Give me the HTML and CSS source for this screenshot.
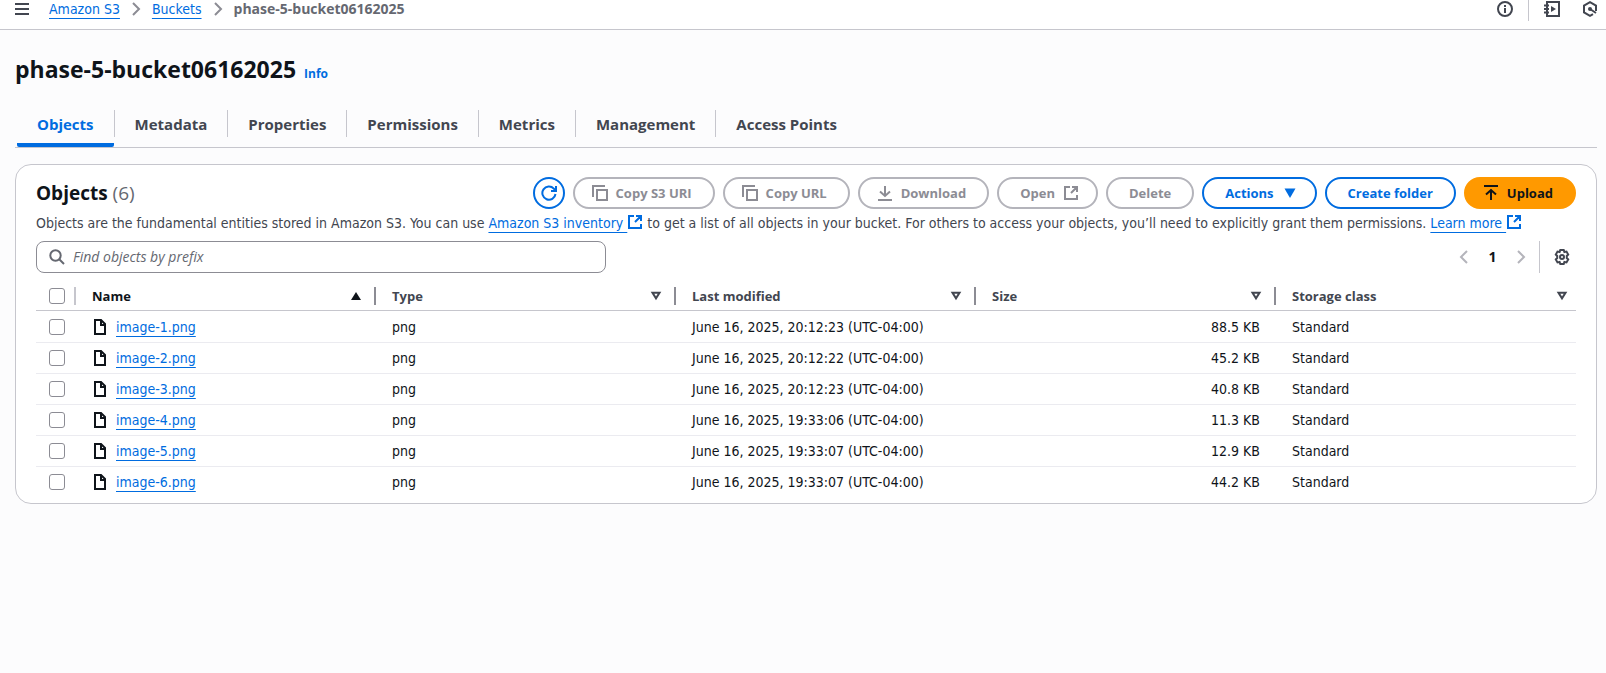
FILE: index.html
```html
<!DOCTYPE html>
<html lang="en">
<head>
<meta charset="utf-8">
<title>phase-5-bucket06162025 - S3 bucket</title>
<link rel="stylesheet" href="styles.css">
</head>
<body>
<svg class="sprite" aria-hidden="true">
  <symbol id="i-external" viewBox="0 0 16 16"><path d="M7 2H2v12h12V10M9 2h5v5M14 2L8 8" /></symbol>
  <symbol id="i-copy" viewBox="0 0 16 16"><path d="M1 12V1h12M5 5h10v10H5z" /></symbol>
  <symbol id="i-file" viewBox="0 0 16 16"><path d="M3 1h6l4 4v10H3zM9 1v5h4" /></symbol>
  <symbol id="i-sort" viewBox="0 0 16 16"><path d="M4.500 4.800h7L8 10.300z" /></symbol>
</svg>

<header class="topbar">
  <button class="icon-btn" type="button" aria-label="Open navigation"><svg class="icon" viewBox="0 0 16 16"><path d="M1 3h14M1 8h14M1 13h14"/></svg></button>
  <nav class="crumbs" aria-label="Breadcrumbs">
    <a href="#">Amazon S3</a>
    <svg class="icon chevron" viewBox="0 0 16 16"><path d="M5 2l6 6-6 6"/></svg>
    <a href="#">Buckets</a>
    <svg class="icon chevron" viewBox="0 0 16 16"><path d="M5 2l6 6-6 6"/></svg>
    <span class="current">phase-5-bucket06162025</span>
  </nav>
  <div class="tools">
    <button class="icon-btn" type="button" aria-label="Info"><svg class="icon" viewBox="0 0 16 16"><circle cx="8" cy="8" r="7"/><path d="M8 7v5M8 4v2"/></svg></button>
    <span class="tool-rule"></span>
    <button class="icon-btn" type="button" aria-label="Tutorials"><svg class="icon" viewBox="0 0 16 16"><path d="M3 1h12v14H3zM0 4.500h5M0 8h5M0 11.500h5"/><path class="solid" d="M7 5l5 3-5 3z"/></svg></button>
    <button class="icon-btn" type="button" aria-label="Assistant"><svg class="icon" viewBox="0 0 16 16"><path d="M14 10V4.600L8 1.200 2 4.600v6.800l6 3.400 3-1.700M8 8l6 4"/><circle class="solid" cx="8" cy="8" r="2"/></svg></button>
  </div>
</header>

<main class="page">
  <div class="title">
    <h1>phase-5-bucket06162025</h1>
    <a class="info" href="#">Info</a>
  </div>

  <nav class="tabs" aria-label="Bucket sections">
    <a class="tab active" href="#">Objects</a><a class="tab" href="#">Metadata</a><a class="tab" href="#">Properties</a><a class="tab" href="#">Permissions</a><a class="tab" href="#">Metrics</a><a class="tab" href="#">Management</a><a class="tab" href="#">Access Points</a>
  </nav>

  <section class="panel">
    <div class="panel-head">
      <h2>Objects <span class="count">(6)</span></h2>
      <div class="actions">
        <button class="btn round" type="button" aria-label="Refresh"><svg class="icon" viewBox="0 0 16 16"><path d="M14.500 9A6.600 6.600 0 1 1 12.800 3.600L14.500 5.500M15 1v5h-5"/></svg></button>
        <button class="btn lead" type="button" disabled><svg class="icon"><use href="#i-copy"/></svg>Copy S3 URI</button>
        <button class="btn lead" type="button" disabled><svg class="icon"><use href="#i-copy"/></svg>Copy URL</button>
        <button class="btn lead" type="button" disabled><svg class="icon" viewBox="0 0 16 16"><path d="M1 15h14M8 1v10M3 6.500L8 11l5-4.500"/></svg>Download</button>
        <button class="btn trail" type="button" disabled>Open<svg class="icon"><use href="#i-external"/></svg></button>
        <button class="btn" type="button" disabled>Delete</button>
        <button class="btn trail" type="button">Actions<svg class="icon" viewBox="0 0 16 16"><path class="solid" d="M2.500 3.500h11L8 13z"/></svg></button>
        <button class="btn" type="button">Create folder</button>
        <button class="btn lead primary" type="button"><svg class="icon" viewBox="0 0 16 16"><path d="M1 1h14M8 15V5M3 9.500L8 5l5 4.500"/></svg>Upload</button>
      </div>
    </div>
    <p class="about">Objects are the fundamental entities stored in Amazon S3. You can use <a href="#">Amazon S3 inventory </a><svg class="icon ext"><use href="#i-external"/></svg> to get a list of all objects in your bucket. For others to access your objects, you’ll need to explicitly grant them permissions. <a href="#">Learn more </a><svg class="icon ext"><use href="#i-external"/></svg></p>

    <div class="filter">
      <label class="search">
        <svg class="icon" viewBox="0 0 16 16"><circle cx="6.500" cy="6.500" r="5.200"/><path d="M10.500 10.500L15 15"/></svg>
        <input type="search" placeholder="Find objects by prefix" aria-label="Find objects by prefix">
      </label>
      <div class="pager">
        <button class="icon-btn faint" type="button" aria-label="Previous page"><svg class="icon" viewBox="0 0 16 16"><path d="M11 2L5 8l6 6"/></svg></button>
        <button class="page-no" type="button">1</button>
        <button class="icon-btn faint" type="button" aria-label="Next page"><svg class="icon" viewBox="0 0 16 16"><path d="M5 2l6 6-6 6"/></svg></button>
        <span class="pager-rule"></span>
        <button class="icon-btn" type="button" aria-label="Preferences"><svg class="icon" viewBox="0 0 16 16"><path d="M6.300 1h3.400l.7 2 2.100-.4 1.700 2.900L12.800 7v2l1.400 1.500-1.700 2.900-2.100-.4-.7 2H6.300l-.7-2-2.100.4-1.700-2.900L3.200 9V7L1.800 5.500l1.700-2.900 2.100.4z"/><circle cx="8" cy="8" r="2"/></svg></button>
      </div>
    </div>

    <table class="objects">
      <colgroup><col class="c-check"><col class="c-data"><col class="c-data"><col class="c-data"><col class="c-data"><col></colgroup>
      <thead>
        <tr>
          <th><div class="th check"><input type="checkbox" aria-label="Select all"></div></th>
          <th><div class="th sorted">Name<svg class="icon"><path class="solid" d="M3 12h10L8 4z"/></svg></div></th>
          <th><div class="th">Type<svg class="icon"><use href="#i-sort"/></svg></div></th>
          <th><div class="th">Last modified<svg class="icon"><use href="#i-sort"/></svg></div></th>
          <th><div class="th">Size<svg class="icon"><use href="#i-sort"/></svg></div></th>
          <th><div class="th last">Storage class<svg class="icon"><use href="#i-sort"/></svg></div></th>
        </tr>
      </thead>
      <tbody>
        <tr><td class="pick"><input type="checkbox" aria-label="Select image-1.png"></td><td><span class="file"><svg class="icon"><use href="#i-file"/></svg><a href="#">image-1.png</a></span></td><td>png</td><td>June 16, 2025, 20:12:23 (UTC-04:00)</td><td class="num">88.5 KB</td><td>Standard</td></tr>
        <tr><td class="pick"><input type="checkbox" aria-label="Select image-2.png"></td><td><span class="file"><svg class="icon"><use href="#i-file"/></svg><a href="#">image-2.png</a></span></td><td>png</td><td>June 16, 2025, 20:12:22 (UTC-04:00)</td><td class="num">45.2 KB</td><td>Standard</td></tr>
        <tr><td class="pick"><input type="checkbox" aria-label="Select image-3.png"></td><td><span class="file"><svg class="icon"><use href="#i-file"/></svg><a href="#">image-3.png</a></span></td><td>png</td><td>June 16, 2025, 20:12:23 (UTC-04:00)</td><td class="num">40.8 KB</td><td>Standard</td></tr>
        <tr><td class="pick"><input type="checkbox" aria-label="Select image-4.png"></td><td><span class="file"><svg class="icon"><use href="#i-file"/></svg><a href="#">image-4.png</a></span></td><td>png</td><td>June 16, 2025, 19:33:06 (UTC-04:00)</td><td class="num">11.3 KB</td><td>Standard</td></tr>
        <tr><td class="pick"><input type="checkbox" aria-label="Select image-5.png"></td><td><span class="file"><svg class="icon"><use href="#i-file"/></svg><a href="#">image-5.png</a></span></td><td>png</td><td>June 16, 2025, 19:33:07 (UTC-04:00)</td><td class="num">12.9 KB</td><td>Standard</td></tr>
        <tr><td class="pick"><input type="checkbox" aria-label="Select image-6.png"></td><td><span class="file"><svg class="icon"><use href="#i-file"/></svg><a href="#">image-6.png</a></span></td><td>png</td><td>June 16, 2025, 19:33:07 (UTC-04:00)</td><td class="num">44.2 KB</td><td>Standard</td></tr>
      </tbody>
    </table>
  </section>
</main>
</body>
</html>
```
FILE: styles.css
```css
:root {
  --text: #0f141a;
  --soft: #424650;
  --mute: #656871;
  --link: #006ce0;
  --line: #c6c6cd;
  --body: "DejaVu Sans Condensed", "Open Sans", sans-serif;
  --bold: "Open Sans", "Noto Sans", sans-serif;
}

* { box-sizing: border-box; }

body {
  margin: 0;
  background: #fcfcfd;
  color: var(--text);
  font: 14px/20px var(--body);
}

button { font: inherit; cursor: pointer; }

a {
  color: var(--link);
  text-decoration: underline;
  text-decoration-thickness: 1px;
  text-underline-offset: 4px;
}

.sprite { display: none; }

.icon {
  flex: none;
  width: 16px;
  height: 16px;
  fill: none;
  stroke: currentColor;
  stroke-width: 2;
}

.solid { fill: currentColor; stroke: none; }

.icon-btn {
  display: flex;
  padding: 0;
  border: 0;
  background: none;
  color: var(--soft);
}

/* Top bar */
.topbar {
  display: flex;
  align-items: flex-start;
  gap: 19px;
  height: 30px;
  padding-left: 14px;
  border-bottom: 1px solid var(--line);
  background: #fff;
}

.topbar .icon-btn { padding-top: 1px; }

.crumbs {
  display: flex;
  align-items: center;
  gap: 8px;
}

.crumbs a, .current { line-height: 18px; }

.chevron { color: #8c8c94; }

.current { color: var(--mute); font-family: var(--bold); font-weight: 700; }

.tools {
  display: flex;
  gap: 22px;
  margin-left: auto;
  padding-right: 8px;
}

.tool-rule { width: 1px; height: 21px; margin: 0 -7px; background: var(--line); }

/* Page title */
.page { padding: 21px 9px 0 15px; }

.title { display: flex; align-items: baseline; gap: 8px; }

h1 {
  margin: 0;
  font: 700 23px/36px var(--bold);
}

.info {
  font: 700 12px/16px var(--bold);
  text-decoration: none;
}

/* Tabs */
.tabs {
  display: flex;
  gap: 1px;
  margin-top: 17px;
  padding-left: 2px;
  border-bottom: 1px solid var(--line);
}

.tab {
  position: relative;
  padding: 8px 20px 7px;
  border-bottom: 4px solid transparent;
  border-radius: 2px;
  color: var(--soft);
  font: 700 15px/24px var(--bold);
  text-decoration: none;
}

.tab:not(:last-child)::after {
  content: "";
  position: absolute;
  top: 6px;
  right: -1px;
  height: 27px;
  border-right: 1px solid var(--line);
}

.tab.active { border-bottom-color: var(--link); color: var(--link); }

/* Objects panel */
.panel {
  margin-top: 16px;
  padding: 12px 20px 5px;
  border: 1px solid var(--line);
  border-radius: 16px;
  background: #fff;
}

.panel-head {
  display: flex;
  align-items: center;
  justify-content: space-between;
}

h2 { margin: 0; font: 700 19px/24px var(--bold); }

.count { color: var(--mute); font-weight: 400; }

.actions { display: flex; gap: 8px; }

.btn {
  display: flex;
  align-items: center;
  gap: 8px;
  height: 32px;
  padding: 0 21px;
  border: 2px solid var(--link);
  border-radius: 16px;
  background: #fff;
  color: var(--link);
  font: 700 13px/20px var(--bold);
}

.btn.lead { padding-left: 17px; }
.btn.trail { padding-right: 17px; }
.btn.round { width: 32px; padding: 0; justify-content: center; }
.btn:disabled { border-color: #b4b4bb; color: #8c8c94; }
.btn.primary { border-color: #f90; background: #f90; color: var(--text); }

.about { margin: 4px 0 8px; color: var(--soft); }

.ext { width: 16px; height: 16px; color: var(--link); vertical-align: -2px; }

.filter {
  display: flex;
  align-items: center;
  justify-content: space-between;
}

.search {
  display: flex;
  align-items: center;
  gap: 8px;
  width: 37%;
  height: 32px;
  padding: 0 12px;
  border: 1px solid #8c8c94;
  border-radius: 8px;
  color: var(--mute);
}

.search input {
  flex: 1;
  min-width: 0;
  padding: 0;
  border: 0;
  outline: 0;
  background: none;
  font: 14px/20px var(--bold);
}

.search input::placeholder { color: var(--mute); font-style: italic; opacity: 1; }

.pager { display: flex; align-items: center; padding-right: 6px; }

.faint { color: #b4b4bb; }

.page-no {
  width: 41px;
  padding: 0;
  border: 0;
  background: none;
  color: var(--text);
  font: 700 14px/20px var(--bold);
}

.pager-rule { width: 1px; height: 32px; margin: 0 14px 0 10px; background: var(--line); }

/* Table */
.objects {
  width: 100%;
  margin-top: 5px;
  border-collapse: separate;
  border-spacing: 0;
  table-layout: fixed;
}

.c-check { width: 40px; }
.c-data { width: 300px; }

th { padding: 9px 0 5px; border-bottom: 1px solid var(--line); text-align: left; }

.th {
  display: flex;
  align-items: center;
  justify-content: space-between;
  height: 18px;
  padding: 0 10px 0 16px;
  border-right: 2px solid #8c8c94;
  color: var(--soft);
  font: 700 13px/18px var(--bold);
}

.th.check { padding: 0 0 0 13px; border-right-color: var(--line); }
.th.sorted { color: var(--text); }
.th.last { padding-right: 6px; border-right: 0; }

td {
  height: 31px;
  padding: 0 16px;
  border-bottom: 1px solid #ebebf0;
}

tbody tr:first-child td { height: 32px; padding-top: 1px; }
tbody tr:last-child td { border-bottom-color: transparent; }

td.pick { padding-left: 13px; padding-right: 0; }
.num { text-align: right; }

input[type="checkbox"] {
  appearance: none;
  display: block;
  width: 16px;
  height: 16px;
  margin: 0;
  border: 1px solid #8c8c94;
  border-radius: 3px;
  background: #fff;
}

.file { display: flex; align-items: center; gap: 8px; }
```
